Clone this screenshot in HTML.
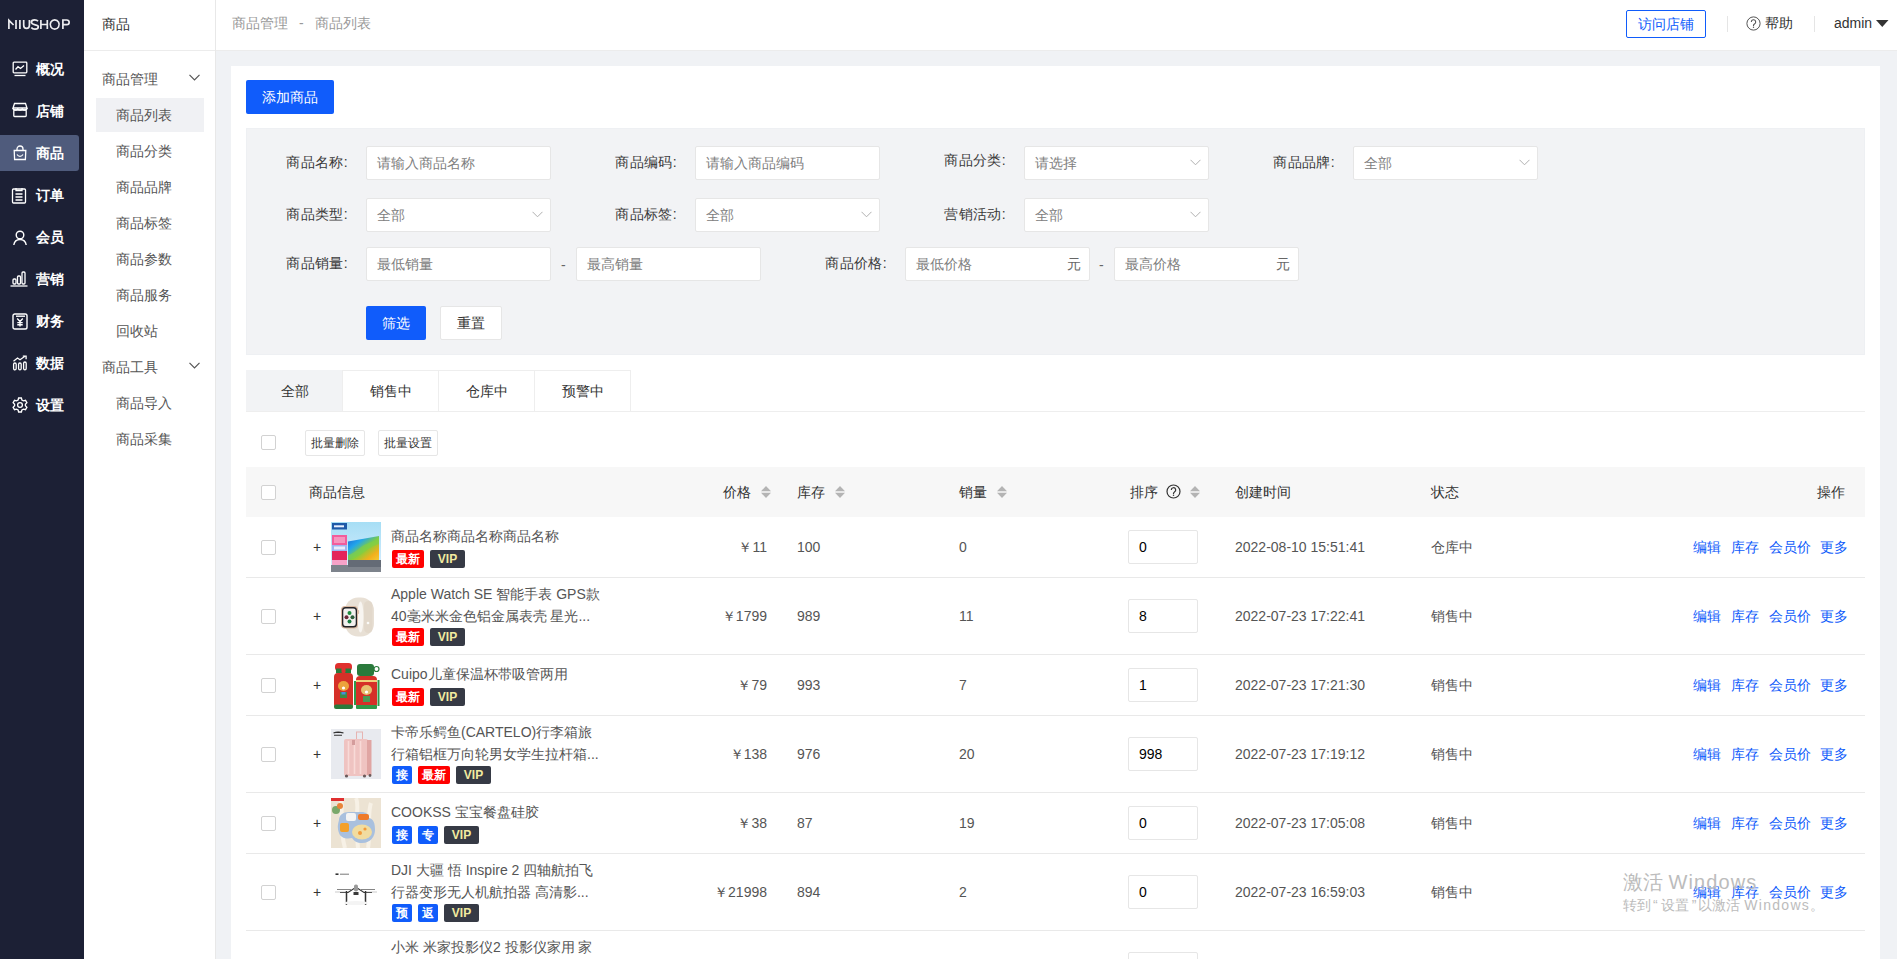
<!DOCTYPE html>
<html><head><meta charset="utf-8">
<style>
*{box-sizing:border-box;margin:0;padding:0}
html,body{width:1897px;height:959px;overflow:hidden;background:#f0f2f5;font-family:"Liberation Sans",sans-serif;font-size:14px;color:#333}
.a{position:absolute;white-space:nowrap}
#side{position:absolute;left:0;top:0;width:84px;height:959px;background:#1c2035}
#side .logo{left:8px;top:15px;color:#fff;font-size:14px;letter-spacing:-0.3px;line-height:18px}
.mi{position:absolute;left:0;width:80px;height:35px;color:#fff;font-size:14px;font-weight:bold}
.mi.on{background:#4f5b7c;border-radius:0 3px 3px 0;width:79px;height:36px}

.mi span{position:absolute;left:36px;top:9px;line-height:18px}
#side2{position:absolute;left:84px;top:0;width:132px;height:959px;background:#fff;border-right:1px solid #e8e8e8}
#side2 .hd{position:absolute;left:0;top:0;width:131px;height:51px;border-bottom:1px solid #ececec}
.s2{position:absolute;color:#555;font-size:14px;line-height:18px;margin-top:1px}
#hdr{position:absolute;left:216px;top:0;width:1681px;height:51px;background:#fff;border-bottom:1px solid #ececec}
#card{position:absolute;left:231px;top:66px;width:1649px;height:900px;background:#fff}

.btnp{position:absolute;background:#105cfb;color:#fff;border-radius:2px;text-align:center;font-size:14px}
.lbl{position:absolute;color:#3a3a3a;font-size:14px;line-height:18px;text-align:right;width:90px;letter-spacing:.4px}
.inp{position:absolute;height:34px;width:185px;background:#fff;border:1px solid #e6e6e6;border-radius:2px;color:#808080;font-size:14px;line-height:32px;padding-left:10px}
.inp .ar{position:absolute;right:7px;top:12px}
.inp .yuan{position:absolute;right:8px;top:0;color:#666}
.dash{position:absolute;color:#666;font-size:14px;line-height:18px;margin-top:2px}

.tab{position:absolute;top:370px;height:41px;width:97px;border:1px solid #eee;border-bottom:none;background:#fff;text-align:center;line-height:40px;color:#333;font-size:14px}
.cb{position:absolute;width:15px;height:15px;border:1px solid #d2d2d2;border-radius:2px;background:#fff}
.bb{position:absolute;top:430px;height:26px;width:60px;border:1px solid #e6e6e6;border-radius:2px;background:#fff;color:#333;font-size:12px;line-height:24px;text-align:center}
.th{position:absolute;top:483px;line-height:18px;color:#333;font-size:14px}
.srt{position:absolute;top:486px}
.td{position:absolute;line-height:18px;color:#555;font-size:14px}
.tt{position:absolute;line-height:22px;color:#555;font-size:14px;left:391px;white-space:nowrap}
.tag{position:absolute;height:18px;line-height:18px;font-size:12px;color:#fff;text-align:center;border-radius:2px;font-weight:bold}
.tg-r{background:#f00;width:32px}
.tg-v{background:#363a45;color:#f1eba0;width:35px;font-size:12px;font-weight:bold}
.tg-b{background:#105cfb;width:20px}
.sinp{position:absolute;left:1128px;width:70px;height:34px;border:1px solid #e6e6e6;border-radius:2px;background:#fff;color:#000;line-height:32px;padding-left:10px;font-size:14px}
.act{position:absolute;left:1693px;line-height:18px;color:#105cfb;font-size:14px;word-spacing:0}
.rl{position:absolute;left:246px;width:1619px;height:1px;background:#e9e9e9}
</style></head><body>
<div id="side">
  <svg class="a" style="left:0;top:0" width="84" height="40" viewBox="0 0 84 40" fill="none" stroke="#ececef" stroke-width="1.7"><path d="M8.9 29V20.3L13.6 25M16 20v9M19.9 20v9M23.7 20v5.2a2.85 3.2 0 0 0 5.7 0V20M38 21.3c-.7-.9-1.9-1.4-3.3-1.4-1.9 0-3.3.9-3.3 2.4 0 3.2 6.9 2 6.9 4.4 0 1.5-1.5 2.4-3.4 2.4-1.6 0-2.9-.6-3.6-1.6M40.9 20v9M47.3 20v9M41 24.5h6.2M54.7 19.9a4.45 4.6 0 1 0 .01 0zM62.9 29v-9h3.9a2.3 2.3 0 0 1 0 4.7h-3.9"/></svg>
  <div class="mi" style="top:51px"><svg style="position:absolute;left:12px;top:10px" width="16" height="16" viewBox="0 0 16 16" fill="none" stroke="#fff" stroke-width="1.3"><rect x="1.2" y="1.2" width="13.6" height="10.6" rx="0.8"/><path d="M3.5 8.5l2.5-2.8 2.5 1.8 3.5-3"/><path d="M2.5 14.5h11"/></svg><span>概况</span></div>
  <div class="mi" style="top:93px"><svg style="position:absolute;left:12px;top:9px" width="16" height="16" viewBox="0 0 16 16" fill="none" stroke="#fff" stroke-width="1.3"><path d="M2.5 1.5h11l1.5 4.5H1z"/><path d="M1 6c0 1.5 1.2 2 2.5 2s2.2-.8 2.2-1.8M5.7 6.2c0 1 1 1.8 2.3 1.8s2.3-.8 2.3-1.8M10.3 6.2c0 1 .9 1.8 2.2 1.8S15 7.5 15 6"/><rect x="1.8" y="8" width="12.4" height="6.5" rx=".8"/></svg><span>店铺</span></div>
  <div class="mi on" style="top:135px"><svg style="position:absolute;left:12px;top:10px" width="16" height="16" viewBox="0 0 16 16" fill="none" stroke="#fff" stroke-width="1.3"><path d="M2.2 5.5h11.6l-.4 9H2.6z"/><path d="M5 5.5V4a3 3 0 016 0v1.5"/><path d="M5 9.5c.8 1.2 1.8 1.8 3 1.8s2.2-.6 3-1.8"/></svg><span>商品</span></div>
  <div class="mi" style="top:177px"><svg style="position:absolute;left:11px;top:10px" width="16" height="17" viewBox="0 0 16 17" fill="none" stroke="#fff" stroke-width="1.3"><rect x="1.5" y="2" width="13" height="14" rx="1"/><path d="M5 1v2.5h6V1M4.5 7h7M4.5 10h7M4.5 13h7"/></svg><span>订单</span></div>
  <div class="mi" style="top:219px"><svg style="position:absolute;left:12px;top:11px" width="16" height="16" viewBox="0 0 16 16" fill="none" stroke="#fff" stroke-width="1.4"><circle cx="8" cy="5" r="3.8"/><path d="M1.8 15c.5-3.5 3-5.5 6.2-5.5s5.7 2 6.2 5.5"/></svg><span>会员</span></div>
  <div class="mi" style="top:261px"><svg style="position:absolute;left:10px;top:9px" width="18" height="17" viewBox="0 0 18 17" fill="none" stroke="#fff" stroke-width="1.3"><rect x="3" y="9" width="3" height="5" rx="1"/><rect x="7.5" y="6" width="3" height="8" rx="1"/><rect x="12" y="2" width="3" height="12" rx="1"/><path d="M.5 16h17"/></svg><span>营销</span></div>
  <div class="mi" style="top:303px"><svg style="position:absolute;left:12px;top:10px" width="16" height="17" viewBox="0 0 16 17" fill="none" stroke="#fff" stroke-width="1.4"><rect x="1" y="1" width="14" height="15" rx="1.8"/><path d="M4 3.2h9"/><path d="M5.2 5.5L8 8.5l2.8-3M8 8.5v5M5.3 9.6h5.4M5.3 11.8h5.4"/></svg><span>财务</span></div>
  <div class="mi" style="top:345px"><svg style="position:absolute;left:12px;top:10px" width="16" height="16" viewBox="0 0 16 16" fill="none" stroke="#fff" stroke-width="1.3"><rect x="1.6" y="8" width="2.6" height="6.8" rx="1.3"/><rect x="6.6" y="8" width="2.6" height="6.8" rx="1.3"/><rect x="11.6" y="7" width="2.6" height="7.8" rx="1.3"/><path d="M1.5 6.2L5.5 3l2.5 1.8 5-3.5"/><path d="M10.8 1.2h3.3v3" /></svg><span>数据</span></div>
  <div class="mi" style="top:387px"><svg style="position:absolute;left:12px;top:10px" width="16" height="16" viewBox="0 0 16 16" fill="none" stroke="#fff" stroke-width="1.3"><path d="M6.6 1h2.8l.5 2 1.6.9 2-.6 1.4 2.4-1.5 1.5v1.6l1.5 1.5-1.4 2.4-2-.6-1.6.9-.5 2H6.6l-.5-2-1.6-.9-2 .6L1.1 10.3l1.5-1.5V7.2L1.1 5.7l1.4-2.4 2 .6 1.6-.9z"/><circle cx="8" cy="8" r="2.4"/></svg><span>设置</span></div>
</div>
<div id="side2">
  <div class="hd"></div>
  <div class="s2" style="left:18px;top:14px;color:#333">商品</div>
  <div class="s2" style="left:18px;top:69px">商品管理</div><svg class="a" style="left:105px;top:74px" width="11" height="7" viewBox="0 0 11 7"><path d="M.5 .8l5 5 5-5" fill="none" stroke="#555" stroke-width="1.2"/></svg>
  <div style="position:absolute;left:12px;top:98px;width:108px;height:34px;background:#f0f1f4"></div>
  <div class="s2" style="left:32px;top:105px">商品列表</div>
  <div class="s2" style="left:32px;top:141px">商品分类</div>
  <div class="s2" style="left:32px;top:177px">商品品牌</div>
  <div class="s2" style="left:32px;top:213px">商品标签</div>
  <div class="s2" style="left:32px;top:249px">商品参数</div>
  <div class="s2" style="left:32px;top:285px">商品服务</div>
  <div class="s2" style="left:32px;top:321px">回收站</div>
  <div class="s2" style="left:18px;top:357px">商品工具</div><svg class="a" style="left:105px;top:362px" width="11" height="7" viewBox="0 0 11 7"><path d="M.5 .8l5 5 5-5" fill="none" stroke="#555" stroke-width="1.2"/></svg>
  <div class="s2" style="left:32px;top:393px">商品导入</div>
  <div class="s2" style="left:32px;top:429px">商品采集</div>
</div>
<div id="hdr">
  <div class="a" style="left:16px;top:14px;line-height:18px;color:#999">商品管理<span style="margin:0 11px">-</span>商品列表</div>
  <div class="a" style="left:1410px;top:10px;width:80px;height:28px;border:1px solid #105cfb;border-radius:2px;color:#105cfb;line-height:26px;text-align:center;font-size:14px">访问店铺</div>
  <div class="a" style="left:1511px;top:16px;width:1px;height:16px;background:#e5e5e5"></div>
  <svg class="a" style="left:1530px;top:16px" width="15" height="15" viewBox="0 0 15 15"><circle cx="7.5" cy="7.5" r="6.6" fill="none" stroke="#555" stroke-width="1"/><path d="M5.3 5.9a2.2 2.2 0 1 1 3.2 2c-.7.4-1 .8-1 1.5v.5" fill="none" stroke="#555" stroke-width="1.1"/><circle cx="7.5" cy="11.3" r=".7" fill="#555"/></svg>
  <div class="a" style="left:1549px;top:14px;line-height:18px;color:#333;font-size:14px">帮助</div>
  <div class="a" style="left:1598px;top:16px;width:1px;height:16px;background:#e5e5e5"></div>
  <div class="a" style="left:1618px;top:14px;line-height:18px;color:#333;font-size:14px">admin</div>
  <svg class="a" style="left:1660px;top:20px" width="13" height="8" viewBox="0 0 13 8"><path d="M0 0h12.5L6.25 7z" fill="#333"/></svg>
</div>
<div id="card"></div>
<div class="btnp" style="left:246px;top:80px;width:88px;height:34px;line-height:35px">添加商品</div>
<div class="a" style="left:246px;top:128px;width:1619px;height:227px;background:#f2f3f5;border:1px solid #eef0f3"></div>
<div class="lbl" style="left:258px;top:153px">商品名称:</div>
<div class="inp" style="left:366px;top:146px">请输入商品名称</div>
<div class="lbl" style="left:587px;top:153px">商品编码:</div>
<div class="inp" style="left:695px;top:146px">请输入商品编码</div>
<div class="lbl" style="left:916px;top:151px">商品分类:</div>
<div class="inp" style="left:1024px;top:146px">请选择<svg class="ar" width="11" height="7" viewBox="0 0 11 7"><path d="M.5 .8l5 5 5-5" fill="none" stroke="#b0b0b0" stroke-width="1"/></svg></div>
<div class="lbl" style="left:1245px;top:153px">商品品牌:</div>
<div class="inp" style="left:1353px;top:146px">全部<svg class="ar" width="11" height="7" viewBox="0 0 11 7"><path d="M.5 .8l5 5 5-5" fill="none" stroke="#b0b0b0" stroke-width="1"/></svg></div>
<div class="lbl" style="left:258px;top:205px">商品类型:</div>
<div class="inp" style="left:366px;top:198px">全部<svg class="ar" width="11" height="7" viewBox="0 0 11 7"><path d="M.5 .8l5 5 5-5" fill="none" stroke="#b0b0b0" stroke-width="1"/></svg></div>
<div class="lbl" style="left:587px;top:205px">商品标签:</div>
<div class="inp" style="left:695px;top:198px">全部<svg class="ar" width="11" height="7" viewBox="0 0 11 7"><path d="M.5 .8l5 5 5-5" fill="none" stroke="#b0b0b0" stroke-width="1"/></svg></div>
<div class="lbl" style="left:916px;top:205px">营销活动:</div>
<div class="inp" style="left:1024px;top:198px">全部<svg class="ar" width="11" height="7" viewBox="0 0 11 7"><path d="M.5 .8l5 5 5-5" fill="none" stroke="#b0b0b0" stroke-width="1"/></svg></div>
<div class="lbl" style="left:258px;top:254px">商品销量:</div>
<div class="inp" style="left:366px;top:247px">最低销量</div>
<div class="dash" style="left:561px;top:254px">-</div>
<div class="inp" style="left:576px;top:247px">最高销量</div>
<div class="lbl" style="left:797px;top:254px">商品价格:</div>
<div class="inp" style="left:905px;top:247px">最低价格<span class="yuan">元</span></div>
<div class="dash" style="left:1099px;top:254px">-</div>
<div class="inp" style="left:1114px;top:247px">最高价格<span class="yuan">元</span></div>
<div class="btnp" style="left:366px;top:306px;width:60px;height:34px;line-height:34px">筛选</div>
<div class="a" style="left:440px;top:306px;width:62px;height:34px;line-height:32px;background:#fff;border:1px solid #e6e6e6;border-radius:2px;text-align:center;color:#333">重置</div>



<div class="tab" style="left:246px;background:#f2f3f5;border-color:#f2f3f5">全部</div>
<div class="tab" style="left:342px">销售中</div>
<div class="tab" style="left:438px">仓库中</div>
<div class="tab" style="left:534px">预警中</div>
<div class="a" style="left:246px;top:411px;width:1619px;height:1px;background:#eee"></div>
<div class="cb" style="left:261px;top:435px"></div>
<div class="bb" style="left:305px">批量删除</div>
<div class="bb" style="left:378px">批量设置</div>
<div class="a" style="left:246px;top:467px;width:1619px;height:50px;background:#f7f7f7"></div>
<div class="cb" style="left:261px;top:485px"></div>
<div class="th" style="left:309px">商品信息</div>
<div class="th" style="left:723px">价格</div><svg class="srt" style="left:761px" width="10" height="12" viewBox="0 0 10 12"><path d="M5 0L10 5.3H0z" fill="#b4b4b4"/><path d="M5 12L10 6.7H0z" fill="#b4b4b4"/></svg>
<div class="th" style="left:797px">库存</div><svg class="srt" style="left:835px" width="10" height="12" viewBox="0 0 10 12"><path d="M5 0L10 5.3H0z" fill="#b4b4b4"/><path d="M5 12L10 6.7H0z" fill="#b4b4b4"/></svg>
<div class="th" style="left:959px">销量</div><svg class="srt" style="left:997px" width="10" height="12" viewBox="0 0 10 12"><path d="M5 0L10 5.3H0z" fill="#b4b4b4"/><path d="M5 12L10 6.7H0z" fill="#b4b4b4"/></svg>
<div class="th" style="left:1130px">排序</div>
<svg class="a" style="left:1166px;top:484px" width="15" height="15" viewBox="0 0 15 15"><circle cx="7.5" cy="7.5" r="6.5" fill="none" stroke="#333" stroke-width="1.2"/><path d="M5.3 5.9a2.2 2.2 0 1 1 3.2 2c-.7.4-1 .8-1 1.5v.6" fill="none" stroke="#333" stroke-width="1.2"/><circle cx="7.5" cy="11.3" r=".75" fill="#333"/></svg><svg class="srt" style="left:1190px" width="10" height="12" viewBox="0 0 10 12"><path d="M5 0L10 5.3H0z" fill="#b4b4b4"/><path d="M5 12L10 6.7H0z" fill="#b4b4b4"/></svg>
<div class="th" style="left:1235px">创建时间</div>
<div class="th" style="left:1431px">状态</div>
<div class="th" style="left:1817px">操作</div>
<div class="cb" style="left:261px;top:540px"></div>
<div class="td" style="left:313px;top:538px;color:#333">+</div>
<div class="a" style="left:331px;top:522px;width:50px;height:50px"><svg width="50" height="50" viewBox="0 0 50 50"><defs><linearGradient id="sky" x1="0" y1="0" x2="0" y2="1"><stop offset="0" stop-color="#a6def5"/><stop offset="1" stop-color="#dcefff"/></linearGradient><linearGradient id="scr" x1="0" y1="0" x2="1" y2="1"><stop offset="0" stop-color="#1b62d8"/><stop offset=".3" stop-color="#22a6ea"/><stop offset=".55" stop-color="#84cf3c"/><stop offset=".8" stop-color="#f2b01c"/><stop offset="1" stop-color="#f5c932"/></linearGradient></defs>
<rect width="50" height="50" fill="url(#sky)"/><rect x="0" y="43" width="50" height="7" fill="#7d838c"/><rect x="17" y="38" width="33" height="7" fill="#646b76"/>
<path d="M17 19.5L48 14V38H17z" fill="url(#scr)"/><path d="M17 33c5-1 9-5 13-8s8-4 18-8v5c-7 2-11 5-15 8s-8 6-16 7z" fill="#7fcf48" opacity=".7"/>
<rect x="1" y="1" width="15" height="6.5" fill="#1e5aa8"/><rect x="3" y="3.3" width="10" height="2" fill="#e8f0ff"/>
<rect x="1" y="13" width="15" height="10" fill="#f25d9c"/><rect x="1" y="23" width="15" height="6" fill="#9fb4f0"/><rect x="1" y="29" width="15" height="9" fill="#e3245a"/><rect x="1" y="38" width="15" height="5" fill="#f6a2c8"/><rect x="3" y="24.5" width="11" height="3" fill="#fff" opacity=".75"/><rect x="3" y="15" width="11" height="6" fill="#fff" opacity=".35"/></svg></div>
<div class="tt" style="top:525px">商品名称商品名称商品名称</div>
<div class="tag tg-r" style="left:392px;top:550px">最新</div>
<div class="tag tg-v" style="left:430px;top:550px">VIP</div>
<div class="td" style="left:667px;width:100px;text-align:right;top:538px">￥11</div>
<div class="td" style="left:797px;top:538px">100</div>
<div class="td" style="left:959px;top:538px">0</div>
<div class="sinp" style="top:530px">0</div>
<div class="td" style="left:1235px;top:538px">2022-08-10 15:51:41</div>
<div class="td" style="left:1431px;top:538px">仓库中</div>
<div class="act" style="left:1693px;top:538px">编辑</div>
<div class="act" style="left:1731px;top:538px">库存</div>
<div class="act" style="left:1769px;top:538px">会员价</div>
<div class="act" style="left:1820px;top:538px">更多</div>
<div class="rl" style="top:577px"></div>
<div class="cb" style="left:261px;top:609px"></div>
<div class="td" style="left:313px;top:607px;color:#333">+</div>
<div class="a" style="left:331px;top:591px;width:50px;height:50px"><svg width="50" height="50" viewBox="0 0 50 50"><rect width="50" height="50" fill="#fff"/><rect x="14" y="6.5" width="29" height="39" rx="13" fill="#e8e0d5"/><ellipse cx="29.5" cy="26" rx="3" ry="15.5" fill="#f8f5f1"/><rect x="33" y="10" width="8.5" height="32" rx="4.2" fill="#e2d8cb"/><circle cx="37" cy="32" r="1.3" fill="#fbfaf8"/><rect x="10" y="15" width="17" height="22.5" rx="4" fill="#d8b7a0"/><rect x="11" y="16" width="15" height="20.5" rx="3.5" fill="#232327"/><rect x="12.3" y="17.5" width="12.4" height="17.5" rx="2.3" fill="#f2f0ee"/><circle cx="18.5" cy="22" r="2" fill="#1b8a3c"/><circle cx="15.5" cy="26.2" r="2" fill="#6b2a3a"/><circle cx="21.5" cy="26.2" r="2" fill="#2e5d3a"/><circle cx="18.5" cy="30.4" r="2" fill="#1a7a40"/><rect x="26.5" y="19" width="1.6" height="4" rx=".8" fill="#e0bfa8"/></svg></div>
<div class="tt" style="top:583px">Apple Watch SE 智能手表 GPS款</div>
<div class="tt" style="top:605px">40毫米米金色铝金属表壳 星光...</div>
<div class="tag tg-r" style="left:392px;top:628px">最新</div>
<div class="tag tg-v" style="left:430px;top:628px">VIP</div>
<div class="td" style="left:667px;width:100px;text-align:right;top:607px">￥1799</div>
<div class="td" style="left:797px;top:607px">989</div>
<div class="td" style="left:959px;top:607px">11</div>
<div class="sinp" style="top:599px">8</div>
<div class="td" style="left:1235px;top:607px">2022-07-23 17:22:41</div>
<div class="td" style="left:1431px;top:607px">销售中</div>
<div class="act" style="left:1693px;top:607px">编辑</div>
<div class="act" style="left:1731px;top:607px">库存</div>
<div class="act" style="left:1769px;top:607px">会员价</div>
<div class="act" style="left:1820px;top:607px">更多</div>
<div class="rl" style="top:654px"></div>
<div class="cb" style="left:261px;top:678px"></div>
<div class="td" style="left:313px;top:676px;color:#333">+</div>
<div class="a" style="left:331px;top:660px;width:50px;height:50px"><svg width="50" height="50" viewBox="0 0 50 50"><rect width="50" height="50" fill="#fff"/><rect x="4" y="3" width="17" height="8" rx="3.5" fill="#e0302f"/><rect x="5" y="8.5" width="15" height="5" fill="#2a7a3c"/><rect x="10.5" y="5" width="4" height="8" rx="1" fill="#e0302f"/><rect x="3" y="13" width="19" height="35" rx="4" fill="#d63028"/><rect x="3" y="44.5" width="19" height="4.5" rx="2" fill="#2b7a3c"/><ellipse cx="12.5" cy="26" rx="5.5" ry="5" fill="#eca23c"/><circle cx="12.5" cy="28" r="1.6" fill="#fff"/><rect x="9" y="32" width="7" height="6" fill="#3d8c47"/><rect x="10.5" y="32" width="4" height="2.5" fill="#4b8be0"/><rect x="26" y="4" width="17" height="12" rx="3" fill="#2a7a3c"/><circle cx="45.5" cy="9" r="2.5" fill="none" stroke="#2a7a3c" stroke-width="1.2"/><rect x="25" y="16" width="21" height="32" rx="4" fill="#d63028"/><rect x="25" y="20" width="21" height="2" fill="#f2d07a"/><ellipse cx="35.5" cy="30" rx="5.5" ry="5" fill="#e8c070"/><circle cx="35.5" cy="32" r="1.6" fill="#fff"/><rect x="32" y="36" width="7" height="6" fill="#4a9a55"/><path d="M24 21v24M47.5 20v26" stroke="#2f9a4a" stroke-width="2"/><rect x="25" y="45" width="21" height="4" rx="1" fill="#2f9a4a"/></svg></div>
<div class="tt" style="top:663px">Cuipo儿童保温杯带吸管两用</div>
<div class="tag tg-r" style="left:392px;top:688px">最新</div>
<div class="tag tg-v" style="left:430px;top:688px">VIP</div>
<div class="td" style="left:667px;width:100px;text-align:right;top:676px">￥79</div>
<div class="td" style="left:797px;top:676px">993</div>
<div class="td" style="left:959px;top:676px">7</div>
<div class="sinp" style="top:668px">1</div>
<div class="td" style="left:1235px;top:676px">2022-07-23 17:21:30</div>
<div class="td" style="left:1431px;top:676px">销售中</div>
<div class="act" style="left:1693px;top:676px">编辑</div>
<div class="act" style="left:1731px;top:676px">库存</div>
<div class="act" style="left:1769px;top:676px">会员价</div>
<div class="act" style="left:1820px;top:676px">更多</div>
<div class="rl" style="top:715px"></div>
<div class="cb" style="left:261px;top:747px"></div>
<div class="td" style="left:313px;top:745px;color:#333">+</div>
<div class="a" style="left:331px;top:729px;width:50px;height:50px"><svg width="50" height="50" viewBox="0 0 50 50"><rect width="50" height="50" fill="#e8eaef"/><path d="M2.5 4c3-1.2 6-1.2 10 0M3 6.2h8" stroke="#333" stroke-width="1.1"/><rect x="25.5" y="3" width="6" height="8" fill="none" stroke="#e6b3b1" stroke-width="1"/><rect x="13" y="10" width="24" height="37" rx="2" fill="#efc3c1"/><rect x="36" y="11" width="4.5" height="35" fill="#e0a5a3"/><path d="M17.5 12v33M23.5 12v33M29.5 12v33" stroke="#f8dad8" stroke-width="1.6"/><rect x="21" y="11" width="3" height="5" fill="#d49c9c"/><circle cx="15.5" cy="47" r="1.6" fill="#6a5a5a"/><circle cx="33.5" cy="47" r="1.6" fill="#6a5a5a"/><circle cx="39" cy="46.5" r="1.4" fill="#6a5a5a"/></svg></div>
<div class="tt" style="top:721px">卡帝乐鳄鱼(CARTELO)行李箱旅</div>
<div class="tt" style="top:743px">行箱铝框万向轮男女学生拉杆箱...</div>
<div class="tag tg-b" style="left:392px;top:766px">接</div>
<div class="tag tg-r" style="left:418px;top:766px">最新</div>
<div class="tag tg-v" style="left:456px;top:766px">VIP</div>
<div class="td" style="left:667px;width:100px;text-align:right;top:745px">￥138</div>
<div class="td" style="left:797px;top:745px">976</div>
<div class="td" style="left:959px;top:745px">20</div>
<div class="sinp" style="top:737px">998</div>
<div class="td" style="left:1235px;top:745px">2022-07-23 17:19:12</div>
<div class="td" style="left:1431px;top:745px">销售中</div>
<div class="act" style="left:1693px;top:745px">编辑</div>
<div class="act" style="left:1731px;top:745px">库存</div>
<div class="act" style="left:1769px;top:745px">会员价</div>
<div class="act" style="left:1820px;top:745px">更多</div>
<div class="rl" style="top:792px"></div>
<div class="cb" style="left:261px;top:816px"></div>
<div class="td" style="left:313px;top:814px;color:#333">+</div>
<div class="a" style="left:331px;top:798px;width:50px;height:50px"><svg width="50" height="50" viewBox="0 0 50 50"><rect width="50" height="50" fill="#ece3d3"/><path d="M10 0c2 10-2 30 4 50M40 5c-4 10 0 30-3 45M25 0c4 8-2 20 2 50" stroke="#f7f1e6" stroke-width="4" fill="none"/><rect x="0" y="0" width="13" height="3" fill="#e03030"/><circle cx="5" cy="12" r="4" fill="#7aa86a"/><circle cx="9" cy="8" r="3" fill="#e8843a"/><path d="M8 22c0-5 4-8 10-8s10 0 13 0 7 2 7 6c5 1 6 6 6 12s-4 13-13 13c-5 0-8-2-10-5-4 1-11 1-13-5s-1-9 0-13z" fill="#a9c0de"/><ellipse cx="31" cy="34" rx="10" ry="7.5" fill="#f1dca0"/><rect x="9" y="25" width="9" height="9" rx="2" fill="#f3a02a"/><rect x="27" y="16" width="11" height="6" rx="2" fill="#ee7a2a"/><rect x="15" y="15" width="10" height="8" rx="2" fill="#f4f4f4"/><circle cx="29" cy="35" r="2" fill="#f39a3a"/><circle cx="34" cy="31" r="1.6" fill="#f39a3a"/></svg></div>
<div class="tt" style="top:801px">COOKSS 宝宝餐盘硅胶</div>
<div class="tag tg-b" style="left:392px;top:826px">接</div>
<div class="tag tg-b" style="left:418px;top:826px">专</div>
<div class="tag tg-v" style="left:444px;top:826px">VIP</div>
<div class="td" style="left:667px;width:100px;text-align:right;top:814px">￥38</div>
<div class="td" style="left:797px;top:814px">87</div>
<div class="td" style="left:959px;top:814px">19</div>
<div class="sinp" style="top:806px">0</div>
<div class="td" style="left:1235px;top:814px">2022-07-23 17:05:08</div>
<div class="td" style="left:1431px;top:814px">销售中</div>
<div class="act" style="left:1693px;top:814px">编辑</div>
<div class="act" style="left:1731px;top:814px">库存</div>
<div class="act" style="left:1769px;top:814px">会员价</div>
<div class="act" style="left:1820px;top:814px">更多</div>
<div class="rl" style="top:853px"></div>
<div class="cb" style="left:261px;top:885px"></div>
<div class="td" style="left:313px;top:883px;color:#333">+</div>
<div class="a" style="left:331px;top:867px;width:50px;height:50px"><svg width="50" height="50" viewBox="0 0 50 50"><rect width="50" height="50" fill="#fff"/><path d="M4.5 7.2h3" stroke="#333" stroke-width="1.6"/><path d="M9 7.2h9" stroke="#777" stroke-width="1"/><path d="M9 25.5h8l6-4h4l6 4h8" stroke="#333" stroke-width="1.2" fill="none"/><path d="M6 22.5h14M30 22.5h14" stroke="#666" stroke-width=".8"/><path d="M4 25h12M34 25h12" stroke="#aaa" stroke-width=".6"/><rect x="23" y="17.5" width="4" height="7" rx="1.8" fill="#999"/><path d="M15.5 24v14M34.5 24v14" stroke="#333" stroke-width="1.5"/><rect x="22.5" y="25" width="5" height="3" fill="#3a3a3a"/><ellipse cx="25" cy="36" rx="12" ry="2" fill="#f4f4f4"/></svg></div>
<div class="tt" style="top:859px">DJI 大疆 悟 Inspire 2 四轴航拍飞</div>
<div class="tt" style="top:881px">行器变形无人机航拍器 高清影...</div>
<div class="tag tg-b" style="left:392px;top:904px">预</div>
<div class="tag tg-b" style="left:418px;top:904px">返</div>
<div class="tag tg-v" style="left:444px;top:904px">VIP</div>
<div class="td" style="left:667px;width:100px;text-align:right;top:883px">￥21998</div>
<div class="td" style="left:797px;top:883px">894</div>
<div class="td" style="left:959px;top:883px">2</div>
<div class="sinp" style="top:875px">0</div>
<div class="td" style="left:1235px;top:883px">2022-07-23 16:59:03</div>
<div class="td" style="left:1431px;top:883px">销售中</div>
<div class="act" style="left:1693px;top:883px">编辑</div>
<div class="act" style="left:1731px;top:883px">库存</div>
<div class="act" style="left:1769px;top:883px">会员价</div>
<div class="act" style="left:1820px;top:883px">更多</div>
<div class="rl" style="top:930px"></div>
<div class="cb" style="left:261px;top:962px"></div>
<div class="td" style="left:313px;top:960px;color:#333">+</div>
<div class="tt" style="top:936px">小米 米家投影仪2 投影仪家用 家</div>
<div class="sinp" style="top:952px"></div>
<div class="a" style="left:1623px;top:870px;line-height:24px;font-size:20px;color:#bcbcbc">激活 <span style="letter-spacing:1.1px">Windows</span></div>
<div class="a" style="left:1623px;top:896px;line-height:18px;font-size:14px;color:#bcbcbc">转到<span style="margin-left:2px;margin-right:3px">“</span>设置<span style="margin-left:3px;margin-right:2px">”</span>以激活 <span style="letter-spacing:1.3px">Windows</span>。</div>
</body></html>
